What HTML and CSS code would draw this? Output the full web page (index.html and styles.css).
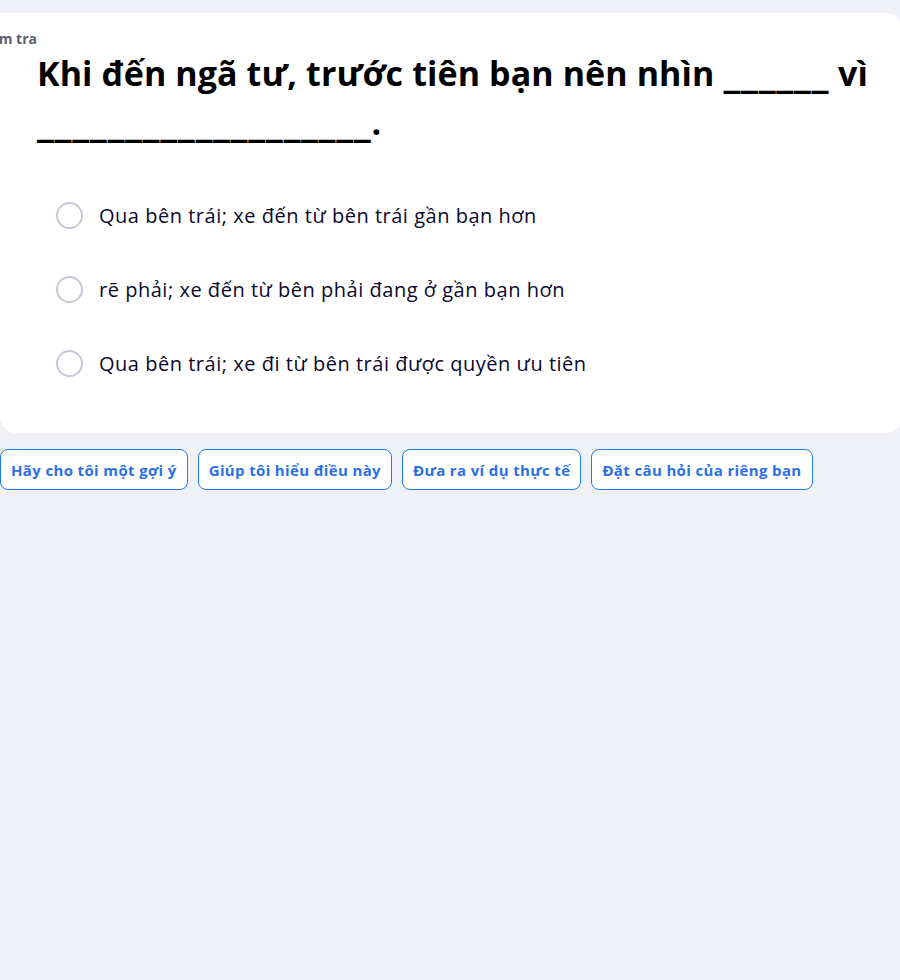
FILE: index.html
```html
<!DOCTYPE html>
<html lang="vi">
<head>
<meta charset="utf-8">
<title>Kiểm tra</title>
<link rel="stylesheet" href="styles.css">
</head>
<body>
<main class="page">
  <section class="card">
    <div class="label-row"><span class="label">Kiểm tra</span></div>
    <h1 class="question">Khi đến ngã tư, trước tiên bạn nên nhìn <span class="blank">______</span> vì <span class="blank">___________________</span>.</h1>
    <ul class="options">
      <li class="option"><span class="radio"></span><span class="option-text">Qua bên trái; xe đến từ bên trái gần bạn hơn</span></li>
      <li class="option"><span class="radio"></span><span class="option-text">rẽ phải; xe đến từ bên phải đang ở gần bạn hơn</span></li>
      <li class="option"><span class="radio"></span><span class="option-text">Qua bên trái; xe đi từ bên trái được quyền ưu tiên</span></li>
    </ul>
  </section>
  <div class="actions">
    <button class="chip">Hãy cho tôi một gợi ý</button>
    <button class="chip">Giúp tôi hiểu điều này</button>
    <button class="chip">Đưa ra ví dụ thực tế</button>
    <button class="chip">Đặt câu hỏi của riêng bạn</button>
  </div>
</main>
</body>
</html>
```
FILE: styles.css
```css
html, body {
  margin: 0;
  padding: 0;
  background: #f0f1f6;
  overflow: hidden;
}
body {
  font-family: "Open Sans", "Noto Sans", "Liberation Sans", sans-serif;
  color: #0a092d;
  width: 900px;
  height: 980px;
}
.page {
  padding-top: 13px;
}
.card {
  width: 902px;
  box-sizing: border-box;
  background: #ffffff;
  border-radius: 0 16px 16px 16px;
  padding: 16px 0 33px 37px;
}
.label-row {
  display: flex;
  justify-content: flex-end;
  width: 0;
  height: 20px;
}
.label {
  flex: none;
  font-size: 14px;
  line-height: 20px;
  font-weight: 700;
  color: #5a6070;
  white-space: nowrap;
}
.question {
  margin: 0;
  font-size: 34px;
  line-height: 49px;
  font-weight: 700;
  color: #000000;
  letter-spacing: 0.1px;
}
.blank {
  font-family: "DejaVu Sans", "Open Sans", sans-serif;
  letter-spacing: 0.6px;
  line-height: 0;
}
.options {
  list-style: none;
  margin: 31px 0 0 0;
  padding: 0;
}
.option {
  display: flex;
  align-items: center;
  height: 74px;
  margin-left: 19px;
  gap: 16px;
}
.radio {
  width: 27px;
  height: 27px;
  box-sizing: border-box;
  border: 2px solid #c8c7d8;
  border-radius: 50%;
  flex: none;
}
.option-text {
  font-size: 20px;
  letter-spacing: 0.52px;
  color: #0a092d;
}
.actions {
  display: flex;
  gap: 10px;
  margin-top: 16px;
}
.chip {
  height: 41px;
  box-sizing: border-box;
  border: 1px solid #1b7cf0;
  border-radius: 8px;
  background: #ffffff;
  color: #2b6fe6;
  font-family: inherit;
  font-size: 15px;
  font-weight: 700;
  letter-spacing: 0.36px;
  padding: 0 10px;
  white-space: nowrap;
}
```
